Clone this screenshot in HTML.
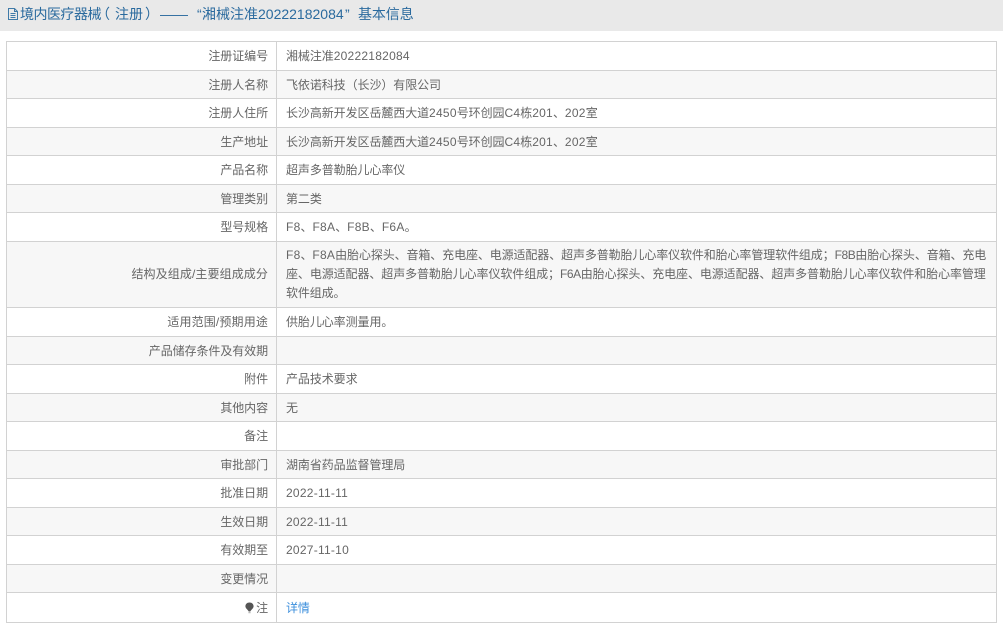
<!DOCTYPE html>
<html lang="zh">
<head>
<meta charset="utf-8">
<title>基本信息</title>
<style>
html,body{margin:0;padding:0;background:#fff;width:1003px;height:629px;overflow:hidden}
body{font-family:"Liberation Sans","Noto Sans CJK SC",sans-serif;font-size:12px;color:#666;position:relative;letter-spacing:-.08px}
.hd{position:absolute;left:0;top:0;width:1003px;height:31px;background:#e9e9e9;color:#2a6a9e;font-size:14px;line-height:29px;white-space:nowrap;letter-spacing:0}
.hd span{position:absolute;top:0}
.hd svg{position:absolute;left:7px;top:7px}
.r{position:absolute;left:6px;width:991px;box-sizing:border-box;border-top:1px solid #d2d2d2;border-left:1px solid #d2d2d2;border-right:1px solid #d2d2d2}
.r.a{background:#f7f7f7}
.l{position:absolute;left:0;top:0;bottom:0;width:269px;border-right:1px solid #d2d2d2;box-sizing:content-box}
.lt{position:absolute;left:0;width:261px;text-align:right;white-space:nowrap;color:#666;line-height:18px;top:5px}
.v{position:absolute;left:279px;white-space:nowrap;color:#666;line-height:18px;top:5px}
.v.m{line-height:19px;top:4px;letter-spacing:-.11px}
.lat{letter-spacing:.25px}
.c{letter-spacing:-.4px}
.p{font-family:"Liberation Sans","Noto Sans CJK TC",sans-serif}
a{color:#3c8fdc;text-decoration:none}
.end{position:absolute;left:6px;top:622px;width:991px;height:1px;background:#d2d2d2}
</style>
</head>
<body>
<div class="hd">
<svg width="12" height="14" viewBox="0 0 12 14"><path d="M1.5 1.5H7.5L10.5 4.5V12.5H1.5Z M7.5 1.5V4.5H10.5 M3.5 6.5H8.5 M3.5 8.5H8.5 M3.5 10.5H8.5" fill="none" stroke="#3f7aa8" stroke-width="1"/></svg>
<span style="left:20px;letter-spacing:-.5px">境内医疗器械</span>
<span style="left:96px">（</span>
<span style="left:115px">注册</span>
<span style="left:145px">）</span>
<span style="left:160px">——</span>
<span style="left:197px">“</span>
<span style="left:202px">湘械注准20222182084</span>
<span style="left:345px">”</span>
<span style="left:358px;letter-spacing:-.1px">基本信息</span>
</div>

<div class="r" style="top:41px;height:29px"><div class="l"></div><span class="lt">注册证编号</span><span class="v">湘械注准<span class="lat">20222182084</span></span></div>
<div class="r a" style="top:70px;height:28px"><div class="l"></div><span class="lt">注册人名称</span><span class="v">飞依诺科技（长沙）有限公司</span></div>
<div class="r" style="top:98px;height:29px"><div class="l"></div><span class="lt">注册人住所</span><span class="v">长沙高新开发区岳麓西大道<span class="lat">2450</span>号环创园<span class="lat">C4</span>栋<span class="lat">201</span>、<span class="lat">202</span>室</span></div>
<div class="r a" style="top:127px;height:28px"><div class="l"></div><span class="lt">生产地址</span><span class="v">长沙高新开发区岳麓西大道<span class="lat">2450</span>号环创园<span class="lat">C4</span>栋<span class="lat">201</span>、<span class="lat">202</span>室</span></div>
<div class="r" style="top:155px;height:29px"><div class="l"></div><span class="lt">产品名称</span><span class="v">超声多普勒胎儿心率仪</span></div>
<div class="r a" style="top:184px;height:28px"><div class="l"></div><span class="lt">管理类别</span><span class="v">第二类</span></div>
<div class="r" style="top:212px;height:29px"><div class="l"></div><span class="lt">型号规格</span><span class="v"><span class="lat">F8</span>、<span class="lat">F8A</span>、<span class="lat">F8B</span>、<span class="lat">F6A</span>。</span></div>
<div class="r a" style="top:241px;height:66px"><div class="l"></div><span class="lt" style="top:23px;letter-spacing:.1px">结构及组成/主要组成成分</span><span class="v m"><span class="lat">F8</span>、<span class="lat">F8A</span>由胎心探头、音箱、充电座、电源适配器、超声多普勒胎儿心率仪软件和胎心率管理软件组成<span class="p">；</span><span class="c">F8B</span>由胎心探头、音箱、充电<br><span style="letter-spacing:-.09px">座、电源适配器、超声多普勒胎儿心率仪软件组成<span class="p">；</span><span class="c">F6A</span>由胎心探头、充电座、电源适配器、超声多普勒胎儿心率仪软件和胎心率管理</span><br>软件组成。</span></div>
<div class="r" style="top:307px;height:29px"><div class="l"></div><span class="lt" style="letter-spacing:.15px">适用范围/预期用途</span><span class="v">供胎儿心率测量用。</span></div>
<div class="r a" style="top:336px;height:28px"><div class="l"></div><span class="lt">产品储存条件及有效期</span></div>
<div class="r" style="top:364px;height:29px"><div class="l"></div><span class="lt">附件</span><span class="v">产品技术要求</span></div>
<div class="r a" style="top:393px;height:28px"><div class="l"></div><span class="lt">其他内容</span><span class="v">无</span></div>
<div class="r" style="top:421px;height:29px"><div class="l"></div><span class="lt">备注</span></div>
<div class="r a" style="top:450px;height:28px"><div class="l"></div><span class="lt">审批部门</span><span class="v">湖南省药品监督管理局</span></div>
<div class="r" style="top:478px;height:29px"><div class="l"></div><span class="lt">批准日期</span><span class="v lat">2022-11-11</span></div>
<div class="r a" style="top:507px;height:28px"><div class="l"></div><span class="lt">生效日期</span><span class="v lat">2022-11-11</span></div>
<div class="r" style="top:535px;height:29px"><div class="l"></div><span class="lt">有效期至</span><span class="v lat">2027-11-10</span></div>
<div class="r a" style="top:564px;height:28px"><div class="l"></div><span class="lt">变更情况</span></div>
<div class="r" style="top:592px;height:30px"><div class="l"></div>
<svg style="position:absolute;left:237px;top:9px" width="11" height="12" viewBox="0 0 11 12"><path d="M5.5 .5C8 .5 9.6 2.2 9.6 4.3C9.6 6.4 7.3 7.6 6.3 9.5H4.7C3.7 7.6 1.4 6.4 1.4 4.3C1.4 2.2 3 .5 5.5 .5Z" fill="#555"/><rect x="4.4" y="10.2" width="2.2" height="1" fill="#aaa"/></svg>
<span class="lt" style="top:6px">注</span><span class="v" style="top:6px"><a href="#">详情</a></span></div>
<div class="end"></div>
</body>
</html>
